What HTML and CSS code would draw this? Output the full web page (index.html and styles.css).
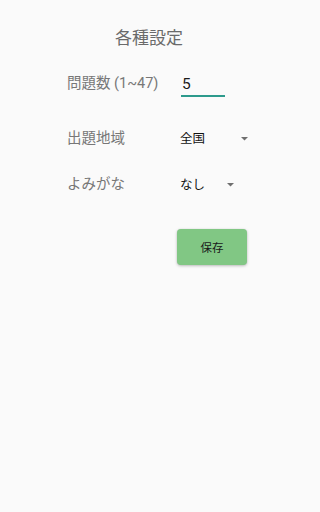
FILE: index.html
```html
<!DOCTYPE html>
<html lang="ja">
<head>
<meta charset="utf-8">
<title>各種設定</title>
<link rel="stylesheet" href="styles.css">
</head>
<body>
<main class="screen">
  <h1 class="title">各種設定</h1>
  <div class="form">
    <div class="row row-count">
      <span class="label">問題数 (1~47)</span>
      <div class="field"><span class="field-text">5</span></div>
    </div>
    <div class="row row-region">
      <span class="label">出題地域</span>
      <div class="spinner">
        <span class="spinner-text spinner-text-wide">全国</span>
        <svg class="arrow" width="7" height="4" viewBox="0 0 7 4"><path d="M0 0 L7 0 L3.5 3.6 Z" fill="#6f6f6f"/></svg>
      </div>
    </div>
    <div class="row row-reading">
      <span class="label">よみがな</span>
      <div class="spinner">
        <span class="spinner-text spinner-text-narrow">なし</span>
        <svg class="arrow" width="7" height="4" viewBox="0 0 7 4"><path d="M0 0 L7 0 L3.5 3.6 Z" fill="#6f6f6f"/></svg>
      </div>
    </div>
    <div class="actions">
      <button class="save-button" type="button">保存</button>
    </div>
  </div>
</main>
</body>
</html>
```
FILE: styles.css
```css
html, body {
  margin: 0;
  padding: 0;
  background: #fafafa;
}

body {
  font-family: Roboto, "Noto Sans CJK JP", sans-serif;
  width: 298px;
  height: 512px;
  overflow: hidden;
}

.screen {
  display: flex;
  flex-direction: column;
}

.title {
  margin: 0;
  padding-top: 26px;
  font-size: 17px;
  font-weight: normal;
  line-height: 24px;
  height: 24px;
  color: #6a6a6a;
  text-align: center;
}

.form {
  display: flex;
  flex-direction: column;
  padding-left: 67px;
}

.row {
  display: flex;
  align-items: flex-start;
}

.row-count {
  margin-top: 24px;
}

.row-region {
  margin-top: 32px;
}

.row-reading {
  margin-top: 26px;
}

.label {
  width: 113px;
  font-size: 14.5px;
  line-height: 20px;
  color: #777;
  white-space: nowrap;
}

.field {
  margin-left: 1px;
  width: 44px;
  height: 20px;
  padding-bottom: 1px;
  border-bottom: 2px solid #2d9a8c;
}

.field-text {
  display: block;
  padding-left: 1px;
  font-size: 15.5px;
  line-height: 20px;
  color: #1a1a1a;
}

.spinner {
  display: flex;
  align-items: center;
  height: 20px;
}

.spinner-text {
  font-size: 12.5px;
  line-height: 20px;
  color: #111;
  white-space: nowrap;
}

.spinner-text-wide {
  width: 61px;
}

.spinner-text-narrow {
  width: 47px;
}

.arrow {
  display: block;
  margin-top: -1px;
}

.actions {
  display: flex;
  margin-top: 34px;
  padding-left: 110px;
}

.save-button {
  width: 70px;
  height: 36px;
  border: none;
  border-radius: 4px;
  background: #81c784;
  box-shadow: 0 1px 3px rgba(0, 0, 0, 0.25), 0 0 1px rgba(0, 0, 0, 0.12);
  font-family: Roboto, "Noto Sans CJK JP", sans-serif;
  font-size: 11.5px;
  color: #1a1a1a;
  padding: 0;
}
```
